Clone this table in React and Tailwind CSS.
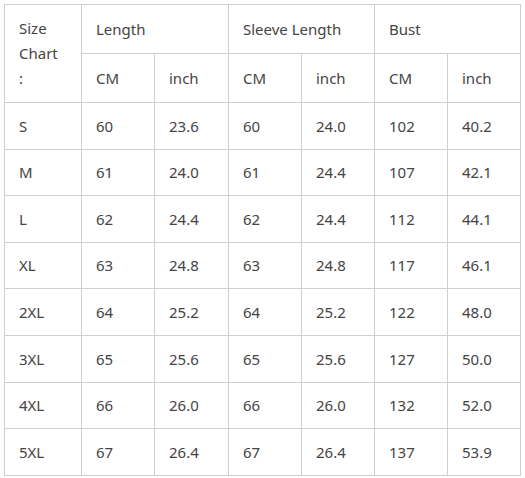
import React from "react";

const rows = [
  ["S", "60", "23.6", "60", "24.0", "102", "40.2"],
  ["M", "61", "24.0", "61", "24.4", "107", "42.1"],
  ["L", "62", "24.4", "62", "24.4", "112", "44.1"],
  ["XL", "63", "24.8", "63", "24.8", "117", "46.1"],
  ["2XL", "64", "25.2", "64", "25.2", "122", "48.0"],
  ["3XL", "65", "25.6", "65", "25.6", "127", "50.0"],
  ["4XL", "66", "26.0", "66", "26.0", "132", "52.0"],
  ["5XL", "67", "26.4", "67", "26.4", "137", "53.9"],
];

const cell = "bg-white flex items-center px-[14px] whitespace-nowrap";

export default function App() {
  return (
    <div className="w-[525px] h-[478px] bg-white pt-[4px] pl-[4px] font-['Noto_Sans','Open_Sans',sans-serif] text-[15px] text-[#444]">
      <div className="grid w-fit grid-cols-[76px_72px_73px_72px_72px_72px_72px] grid-rows-[48px_48px_46px_45px_46px_45px_46px_46px_45px_46px] gap-px bg-[#cfcfcf] border border-[#cfcfcf]">
        <div className={`${cell} row-span-2 leading-[25px]`}>
          <span>Size<br />Chart<br />:</span>
        </div>
        <div className={`${cell} col-span-2`}>Length</div>
        <div className={`${cell} col-span-2`}>Sleeve Length</div>
        <div className={`${cell} col-span-2`}>Bust</div>
        <div className={cell}>CM</div>
        <div className={cell}>inch</div>
        <div className={cell}>CM</div>
        <div className={cell}>inch</div>
        <div className={cell}>CM</div>
        <div className={cell}>inch</div>
        {rows.map((r) =>
          r.map((v, i) => (
            <div key={r[0] + i} className={cell}>
              {v}
            </div>
          ))
        )}
      </div>
    </div>
  );
}
